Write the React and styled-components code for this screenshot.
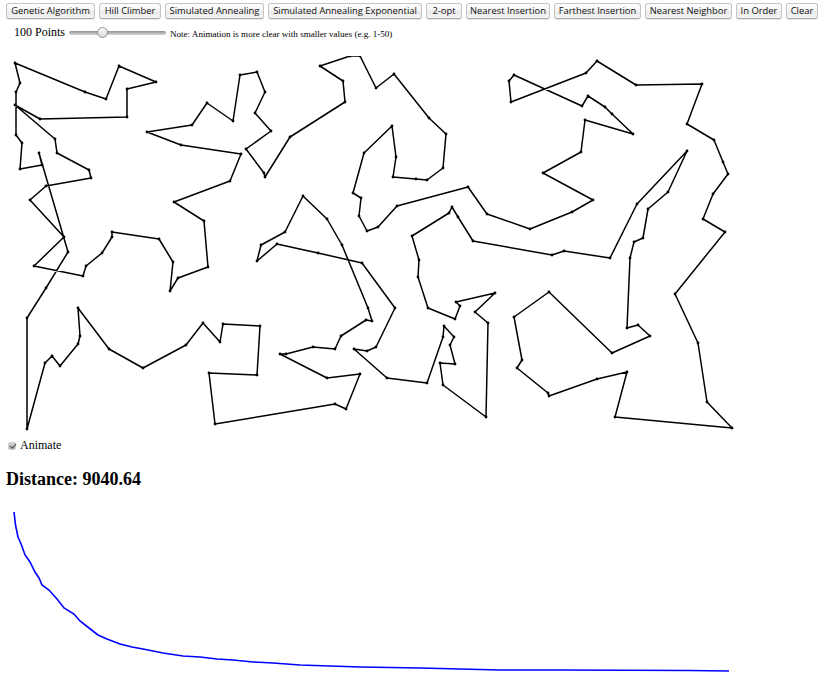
import React from 'react';
import styled, { createGlobalStyle } from 'styled-components';

const GlobalStyle = createGlobalStyle`
  html, body {
    margin: 0;
    padding: 0;
    background: #fff;
    overflow: hidden;
  }
  body {
    font-family: "Liberation Serif", "Times New Roman", serif;
    color: #000;
  }
`;

const Page = styled.div`
  width: 829px;
  height: 684px;
  padding: 3px 0 0 6px;
  box-sizing: border-box;
  overflow: hidden;
`;

const Toolbar = styled.div`
  display: flex;
  gap: 4px;
  height: 16px;
`;

const AlgoButton = styled.button`
  width: ${(p) => p.$width}px;
  height: 16px;
  margin: 0;
  padding: 0;
  flex: none;
  font-family: "Open Sans", "Lucida Grande", sans-serif;
  font-size: 9.4px;
  line-height: 14px;
  color: #111;
  white-space: nowrap;
  background: linear-gradient(#fefefe 0%, #f4f4f4 50%, #e9e9e9 55%, #f6f6f6 100%);
  border: 1px solid #c4c4c4;
  border-bottom-color: #a8a8a8;
  border-radius: 3px;
  box-shadow: 0 1px 0 rgba(0, 0, 0, 0.08);
`;

const Controls = styled.div`
  display: flex;
  align-items: center;
  height: 19px;
  margin-top: 4px;
  padding-left: 8px;
`;

const PointsLabel = styled.span`
  font-size: 12px;
  width: 55px;
  flex: none;
`;

const PointsSlider = styled.input`
  appearance: none;
  width: 97px;
  height: 12px;
  margin: 0 4px 0 0;
  padding: 0;
  background: transparent;
  flex: none;

  &::-webkit-slider-runnable-track {
    height: 4px;
    border-radius: 2px;
    background: linear-gradient(#8f8f8f, #bdbdbd 60%, #d2d2d2);
  }

  &::-webkit-slider-thumb {
    appearance: none;
    width: 11px;
    height: 11px;
    margin-top: -3.5px;
    border-radius: 50%;
    border: 1px solid #8e8e8e;
    box-sizing: border-box;
    background: linear-gradient(#f8f8f8, #dcdcdc);
  }
`;

const Note = styled.small`
  font-size: 9.05px;
  padding-top: 2px;
  white-space: nowrap;
`;

const TourCanvas = styled.svg`
  display: block;
  width: 817px;
  height: 380px;
  margin-top: 14px;
`;

const AnimateRow = styled.label`
  display: flex;
  align-items: center;
  height: 18px;
  padding-left: 2px;
  font-size: 12px;
`;

const AnimateBox = styled.input`
  appearance: none;
  position: relative;
  margin: 1px 4px 0 0;
  border-radius: 2px;
  background: linear-gradient(#d6d6d6, #bcbcbc);
  border: 1px solid #c9c9c9;
  box-sizing: content-box;
  width: 6px;
  height: 6px;

  &::after {
    content: '';
    position: absolute;
    left: 1.5px;
    top: -0.5px;
    width: 2.5px;
    height: 5px;
    border: solid #4a4a4a;
    border-width: 0 1.5px 1.5px 0;
    transform: rotate(40deg);
  }
`;

const Distance = styled.h3`
  margin: 15px 0 0;
  font-size: 18px;
  line-height: 21px;
  font-weight: bold;
`;

const GraphCanvas = styled.svg`
  display: block;
  width: 817px;
  height: 178px;
  margin-top: 16px;
`;

const buttons = [
  ['Genetic Algorithm', 89],
  ['Hill Climber', 62],
  ['Simulated Annealing', 99],
  ['Simulated Annealing Exponential', 154],
  ['2-opt', 36],
  ['Nearest Insertion', 84],
  ['Farthest Insertion', 87],
  ['Nearest Neighbor', 87],
  ['In Order', 46],
  ['Clear', 32],
];

// hand traced from the tour, closed at the end
const tour = [
  [15, 63], [85, 92], [106, 99], [119, 66], [156, 82], [127, 89], [127, 117], [40, 119], [15, 105],
  [55, 139], [57, 153], [89, 170], [91, 178], [46, 186], [30, 200], [64, 237], [34, 266], [83, 276],
  [86, 266], [102, 253], [112, 237], [112, 232], [159, 239], [173, 262], [170, 291], [178, 278],
  [208, 267], [204, 221], [174, 202], [230, 181], [241, 154], [181, 145], [147, 132], [192, 125],
  [207, 103], [233, 121], [240, 75], [257, 72], [265, 92], [255, 113], [271, 131], [246, 149],
  [264, 173], [265, 177], [290, 137], [345, 102], [343, 81], [320, 66], [350, 56], [360, 56],
  [376, 88], [394, 74], [429, 118], [446, 134], [443, 168], [427, 180], [416, 179], [393, 177],
  [396, 157], [392, 126], [364, 153], [353, 193], [361, 198], [359, 216], [367, 231], [378, 227],
  [397, 206], [468, 187], [487, 214], [530, 229], [572, 212], [593, 200], [543, 173], [581, 152],
  [585, 120], [633, 134], [612, 114], [605, 107], [588, 96], [582, 106], [514, 75], [509, 81],
  [511, 102], [586, 73], [597, 61], [636, 85], [702, 84], [687, 124], [714, 140], [723, 162],
  [728, 174], [713, 194], [703, 219], [725, 232], [675, 294], [698, 343], [707, 402], [732, 428],
  [615, 417], [627, 372], [597, 379], [549, 396], [548, 393], [517, 368], [522, 360], [514, 317],
  [549, 292], [612, 353], [650, 336], [638, 325], [627, 328], [630, 258], [634, 242], [643, 238],
  [648, 209], [668, 192], [687, 151], [637, 204], [610, 258], [564, 251], [552, 255], [473, 241],
  [458, 217], [452, 207], [449, 213], [412, 236], [419, 260], [418, 277], [428, 308], [455, 319],
  [460, 306], [456, 302], [495, 293], [475, 312], [488, 323], [486, 417], [443, 385], [440, 363],
  [455, 364], [450, 345], [454, 337], [444, 326], [443, 337], [427, 383], [387, 378], [354, 349],
  [367, 351], [376, 347], [395, 308], [362, 263], [318, 253], [277, 244], [257, 261], [261, 245],
  [285, 232], [303, 196], [327, 219], [342, 245], [368, 308], [372, 321], [366, 320], [341, 336],
  [335, 349], [313, 347], [286, 354], [280, 354], [327, 378], [360, 374], [346, 409], [335, 404],
  [215, 424], [209, 373], [257, 375], [260, 326], [223, 324], [220, 342], [203, 323], [186, 345],
  [143, 368], [109, 349], [78, 308], [80, 336], [78, 344], [60, 366], [52, 356], [45, 363],
  [27, 429], [27, 318], [46, 288], [68, 252], [39, 153], [42, 165], [20, 169], [22, 143], [16, 135],
  [16, 92], [20, 83],
];

const distanceCurve = [
  [14, 512], [15.5, 525], [18, 537], [21.5, 545], [25, 555], [30, 562], [35, 572], [39, 578],
  [42, 585], [49, 590], [57, 599], [64, 608], [74, 614], [80, 621], [89, 628], [98, 635], [107, 639],
  [120, 644], [132, 647], [143, 649], [163, 653], [183, 656], [200, 657], [217, 659], [233, 660],
  [253, 662], [273, 663], [300, 665], [360, 667], [420, 668], [500, 670], [560, 670], [690, 670.5],
  [729, 671],
];

const toPoints = (list) => list.map((p) => p.join(',')).join(' ');

const App = () => (
  <Page>
    <GlobalStyle />
    <Toolbar>
      {buttons.map(([name, width]) => (
        <AlgoButton key={name} $width={width}>{name}</AlgoButton>
      ))}
    </Toolbar>
    <Controls>
      <PointsLabel>100 Points</PointsLabel>
      <PointsSlider type="range" min="1" max="300" defaultValue="100" />
      <Note>Note: Animation is more clear with smaller values (e.g. 1-50)</Note>
    </Controls>
    <TourCanvas viewBox="6 56 817 380">
      <polygon points={toPoints(tour)} fill="none" stroke="#000" strokeWidth="1.5" strokeLinejoin="round" />
      {tour.map(([x, y]) => (
        <circle key={`${x}-${y}`} cx={x} cy={y} r="1.4" fill="#000" />
      ))}
    </TourCanvas>
    <AnimateRow>
      <AnimateBox type="checkbox" defaultChecked />
      Animate
    </AnimateRow>
    <Distance>Distance: 9040.64</Distance>
    <GraphCanvas viewBox="6 506 817 178">
      <polyline points={toPoints(distanceCurve)} fill="none" stroke="#0000ff" strokeWidth="1.6" />
    </GraphCanvas>
  </Page>
);

export default App;
